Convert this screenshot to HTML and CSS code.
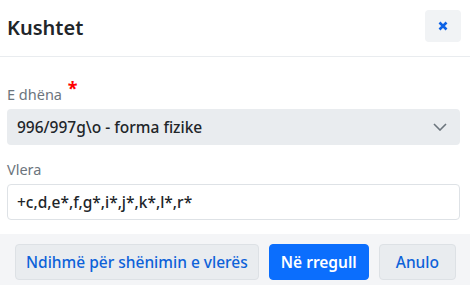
FILE: index.html
```html
<!DOCTYPE html>
<html>
<head>
<meta charset="utf-8">
<link rel="stylesheet" href="styles.css">
</head>
<body>
<div class="modal">
  <div class="modal-header">
    <h1 class="title">Kushtet</h1>
    <button class="close-btn" aria-label="Close">
      <svg width="10" height="10" viewBox="0 0 10 10"><path d="M1.5 1.5 L8.5 8.5 M8.5 1.5 L1.5 8.5" stroke="#0d62e6" stroke-width="2.6" stroke-linecap="butt"/></svg>
    </button>
  </div>
  <div class="modal-body">
    <div class="field">
      <label class="label">E dhëna <span class="req">*</span></label>
      <div class="select">
        <span>996/997g\o - forma fizike</span>
        <svg class="chev" width="14" height="8" viewBox="0 0 14 8"><path d="M1 1 L7 7 L13 1" fill="none" stroke="#6c757d" stroke-width="1.6"/></svg>
      </div>
    </div>
    <div class="field">
      <label class="label">Vlera</label>
      <div class="input">+c,d,e*,f,g*,i*,j*,k*,l*,r*</div>
    </div>
  </div>
  <div class="modal-footer">
    <button class="btn btn-secondary">Ndihmë për shënimin e vlerës</button>
    <button class="btn btn-primary">Në rregull</button>
    <button class="btn btn-secondary btn-wide">Anulo</button>
  </div>
</div>
</body>
</html>
```
FILE: styles.css
```css
html, body {
  margin: 0;
  padding: 0;
  background: #fff;
}
body {
  font-family: "Noto Sans", sans-serif;
  color: #212529;
  width: 470px;
  height: 285px;
  overflow: hidden;
}
.modal {
  display: flex;
  flex-direction: column;
}
.modal-header {
  display: flex;
  align-items: center;
  justify-content: space-between;
  height: 56px;
  padding: 0 9px 0 7px;
  border-bottom: 1px solid #e9ecef;
  box-sizing: content-box;
}
.title {
  margin: 0;
  font-size: 20px;
  font-weight: 600;
  line-height: 24px;
  color: #212529;
}
.close-btn {
  width: 36px;
  height: 32px;
  margin-top: -4px;
  border: none;
  border-radius: 4px;
  background: #f1f3f5;
  display: flex;
  align-items: center;
  justify-content: center;
  padding: 0;
}
.modal-body {
  padding: 25px 10px 14px 7px;
  display: flex;
  flex-direction: column;
  gap: 13px;
}
.field {
  display: flex;
  flex-direction: column;
  gap: 4px;
}
.label {
  font-size: 14.5px;
  line-height: 22px;
  color: #6c757d;
  font-weight: 400;
}
.req {
  color: #ff0000;
  font-size: 18px;
  font-weight: 700;
  position: relative;
  top: -5px;
  margin-left: 2px;
}
.select {
  height: 36px;
  box-sizing: border-box;
  background: #e9ecef;
  border-radius: 4px;
  display: flex;
  align-items: center;
  justify-content: space-between;
  padding: 0 13px 0 10px;
  font-size: 15.5px;
  font-weight: 500;
}
.input {
  height: 36px;
  box-sizing: border-box;
  border: 1px solid #dee2e6;
  border-radius: 4px;
  display: flex;
  align-items: center;
  padding: 0 9px;
  font-size: 15.5px;
  font-weight: 500;
}
.modal-footer {
  background: #f4f5f7;
  display: flex;
  gap: 10px;
  padding: 10px 17px 10px 15px;
  height: 52px;
  box-sizing: border-box;
  flex: 1;
}
.btn {
  font-family: "Noto Sans", sans-serif;
  font-size: 15.5px;
  height: 36px;
  border-radius: 4px;
  padding: 0 10px;
  white-space: nowrap;
  flex-shrink: 0;
  cursor: pointer;
}
.btn-secondary {
  background: #e9ecef;
  border: 1px solid #dde1e5;
  color: #0d62d9;
  font-weight: 500;
}
.btn-wide {
  padding: 0 16px;
}
.btn-primary {
  background: #0b6efd;
  border: 1px solid #0b6efd;
  color: #fff;
  font-weight: 600;
  padding: 0 11px;
}
```
